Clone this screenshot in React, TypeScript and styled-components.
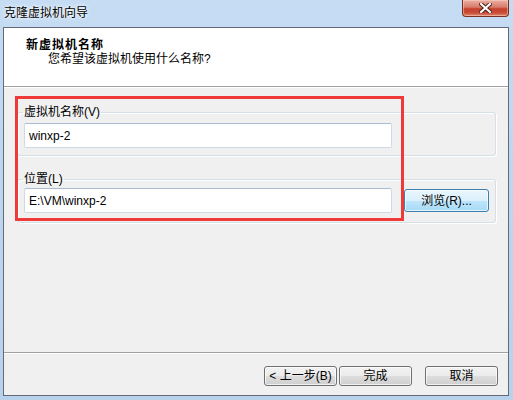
import React from "react";
import styled, { createGlobalStyle } from "styled-components";

const Global = createGlobalStyle`
  html, body { margin: 0; padding: 0; }
  body {
    font-family: "Liberation Sans", "Noto Sans CJK SC", sans-serif;
    font-size: 12px;
    color: #000;
  }
`;

const Window = styled.div`
  width: 513px;
  height: 400px;
  display: flex;
  flex-direction: column;
  background: linear-gradient(180deg, #c5dcf3 0%, #bed7f0 40%, #b9d2ec 100%);
  overflow: hidden;
`;

const TitleBar = styled.div`
  height: 27px;
  display: flex;
  align-items: flex-start;
  padding-left: 4px;
  padding-right: 4px;
  box-sizing: border-box;
  flex: none;
`;

const Title = styled.div`
  margin-top: 5px;
  line-height: 16px;
  font-size: 12px;
  text-shadow: 0 0 6px #fff, 0 0 3px #fff;
`;

const CloseButton = styled.div`
  margin-left: auto;
  width: 47px;
  height: 17px;
  box-sizing: border-box;
  border: 1px solid #7a2e26;
  border-top: none;
  border-radius: 0 0 4px 4px;
  background: linear-gradient(180deg, #eab0a4 0%, #d97a68 45%, #c4412c 55%, #c94c36 80%, #dd8a6f 100%);
  box-shadow: inset 0 0 0 1px rgba(255, 220, 210, 0.45);
  display: flex;
  align-items: center;
  justify-content: center;
`;

const ClientFrame = styled.div`
  margin: 0 4px 4px 3px;
  height: 369px;
  box-sizing: border-box;
  border: 1px solid #646b76;
  background: #f0f0f0;
  display: flex;
  flex-direction: column;
`;

const Header = styled.div`
  height: 58px;
  box-sizing: border-box;
  background: #fff;
  padding: 10px 0 0 22px;
  flex: none;
`;

const HeaderTitle = styled.div`
  font-weight: bold;
  line-height: 14px;
  letter-spacing: 1px;
`;

const HeaderSub = styled.div`
  line-height: 14px;
  margin-left: 22px;
`;

const Divider = styled.div`
  height: 2px;
  flex: none;
  box-sizing: border-box;
  border-top: 1px solid #a0a0a0;
  border-bottom: 1px solid #ffffff;
`;

const Body = styled.div`
  position: relative;
  height: 264px;
  box-sizing: border-box;
  padding: 16px 12px 0 13px;
  display: flex;
  flex-direction: column;
  gap: 15px;
  flex: none;
`;

const Group = styled.fieldset<{ $pt: number; $pb: number }>`
  margin: 0;
  min-width: 0;
  padding: ${(p) => p.$pt}px 0 ${(p) => p.$pb}px 6px;
  border: 1px solid #d5dfe5;
  border-radius: 3px;
  box-shadow: inset 1px 1px 0 #fff, 1px 1px 0 #fff;
`;

const Legend = styled.legend`
  padding: 0 1px;
  margin-left: -1px;
  line-height: 16px;
  font-size: 12px;
`;

const Row = styled.div`
  display: flex;
  align-items: center;
  gap: 12px;
`;

const TextBox = styled.div`
  width: 368px;
  height: 25px;
  box-sizing: border-box;
  background: #fff;
  border: 1px solid #cddbe8;
  border-top-color: #a9bdd2;
  border-radius: 2px;
  padding-left: 4px;
  display: flex;
  align-items: center;
  font-size: 12px;
`;

const Button = styled.button<{ $hot?: boolean; $w: number; $h: number }>`
  width: ${(p) => p.$w}px;
  height: ${(p) => p.$h}px;
  box-sizing: border-box;
  padding: 0;
  margin: 0;
  font-family: "Liberation Sans", "Noto Sans CJK SC", sans-serif;
  font-size: 12px;
  color: #000;
  border-radius: 3px;
  border: 1px solid ${(p) => (p.$hot ? "#3c7fb1" : "#707070")};
  background: ${(p) =>
    p.$hot
      ? "linear-gradient(180deg, #eaf6fd 0%, #d9f0fc 50%, #bee6fd 51%, #a7d9f5 100%)"
      : "linear-gradient(180deg, #f2f2f2 0%, #ebebeb 50%, #dddddd 51%, #cfcfcf 100%)"};
  box-shadow: inset 0 0 0 1px rgba(255, 255, 255, 0.7);
  display: flex;
  align-items: center;
  justify-content: center;
  line-height: 1;
`;

const Highlight = styled.div`
  position: absolute;
  left: 11px;
  top: 8px;
  width: 389px;
  height: 125px;
  box-sizing: border-box;
  border: 3px solid #ef3a3a;
  pointer-events: none;
`;

const Footer = styled.div`
  height: 41px;
  box-sizing: border-box;
  padding: 12px 10px 0 0;
  display: flex;
  justify-content: flex-end;
  align-items: flex-start;
  flex: none;
`;

const NavGroup = styled.div`
  display: flex;
  gap: 2px;
  margin-right: 13px;
`;

export default function App() {
  return (
    <>
      <Global />
      <Window>
        <TitleBar>
          <Title>克隆虚拟机向导</Title>
          <CloseButton>
            <svg width="13" height="10" viewBox="0 0 13 10">
              <path
                d="M2 1 L11 9 M11 1 L2 9"
                stroke="#4a1a14"
                strokeWidth="4"
                strokeLinecap="square"
              />
              <path
                d="M2 1 L11 9 M11 1 L2 9"
                stroke="#ffffff"
                strokeWidth="2.2"
                strokeLinecap="square"
              />
            </svg>
          </CloseButton>
        </TitleBar>
        <ClientFrame>
          <Header>
            <HeaderTitle>新虚拟机名称</HeaderTitle>
            <HeaderSub>您希望该虚拟机使用什么名称?</HeaderSub>
          </Header>
          <Divider />
          <Body>
            <Group $pt={3} $pb={7}>
              <Legend>虚拟机名称(V)</Legend>
              <TextBox>winxp-2</TextBox>
            </Group>
            <Group $pt={1} $pb={9}>
              <Legend>位置(L)</Legend>
              <Row>
                <TextBox>E:\VM\winxp-2</TextBox>
                <Button $hot $w={85} $h={23}>浏览(R)...</Button>
              </Row>
            </Group>
            <Highlight />
          </Body>
          <Divider />
          <Footer>
            <NavGroup>
              <Button $w={73} $h={20}>&lt; 上一步(B)</Button>
              <Button $w={73} $h={20}>完成</Button>
            </NavGroup>
            <Button $w={73} $h={20}>取消</Button>
          </Footer>
        </ClientFrame>
      </Window>
    </>
  );
}
